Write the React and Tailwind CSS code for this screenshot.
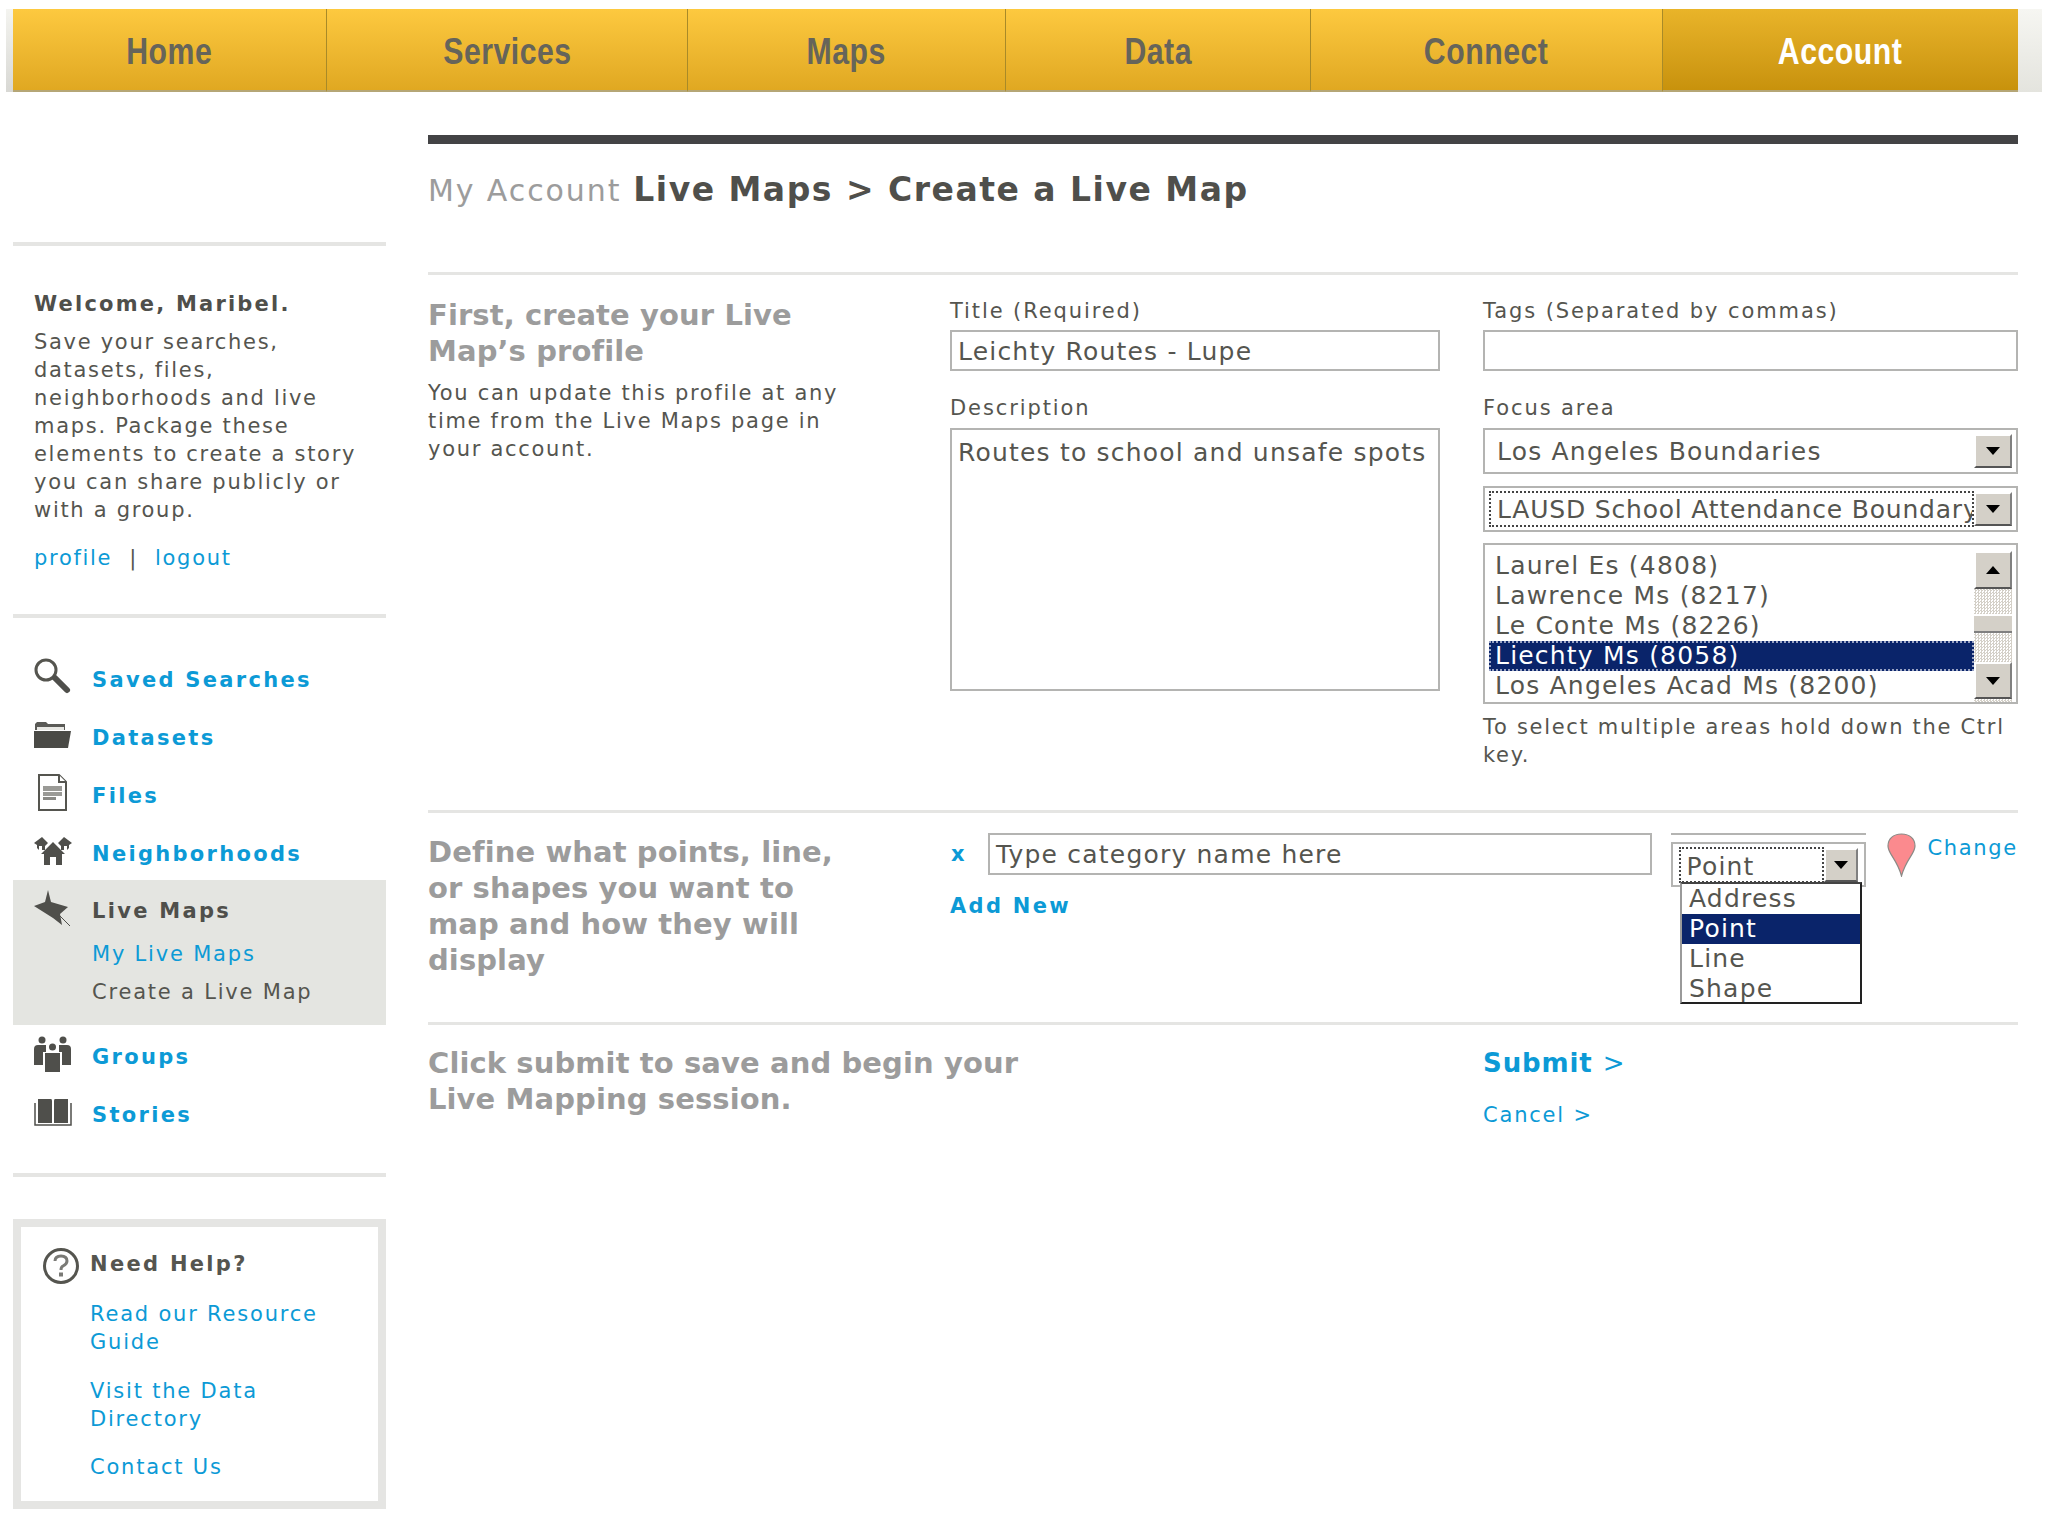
import React from 'react';

const NAV = [
  { label: 'Home', w: 'w-[314px]' },
  { label: 'Services', w: 'w-[361px]' },
  { label: 'Maps', w: 'w-[318px]' },
  { label: 'Data', w: 'w-[305px]' },
  { label: 'Connect', w: 'w-[352px]' },
];

const SearchIcon = () => (
  <svg width="38" height="38" viewBox="0 0 38 38">
    <circle cx="12" cy="12" r="10" fill="none" stroke="#55554f" strokeWidth="3" />
    <path d="M21 20 L33 32" stroke="#4f4f4b" strokeWidth="6" strokeLinecap="round" />
  </svg>
);
const FolderIcon = () => (
  <svg width="37" height="27" viewBox="0 0 37 27">
    <path d="M1 2 L3 0 H12 L14 2 H31 V8 H1 Z" fill="#5a5a56" />
    <path d="M3 5 H30 V8 H3 Z" fill="#e8e8e4" />
    <path d="M0 26 V9 H37 L34 26 Z" fill="#4a4a46" />
  </svg>
);
const FileIcon = () => (
  <svg width="30" height="38" viewBox="0 0 30 38" className="ml-[4px]">
    <path d="M1 1 H21 L28 8 V36 H1 Z" fill="#fff" stroke="#55554f" strokeWidth="2" />
    <path d="M21 1 V8 H28" fill="#fff" stroke="#55554f" strokeWidth="2" />
    <path d="M5 12 H24 V17 H5 Z M5 18 H24 V22 H5 Z" fill="#9a9a96" />
    <path d="M5 23 H18 V26 H5 Z" fill="#8a8a86" />
  </svg>
);
const HomeIcon = () => (
  <svg width="38" height="30" viewBox="0 0 38 30">
    <path d="M19 6 L31 18 H28 V29 H22 V21 H16 V29 H10 V18 H7 Z" fill="#4f4f4b" />
    <path d="M8 1 L14 7 L11 10 V14 H8 V10 H5 V14 L3 12 V9 L0 7 Z M30 1 L38 7 L35 9 V12 L33 14 V10 H30 V14 H27 V10 L24 7 Z" fill="#4f4f4b" />
  </svg>
);
const PinIcon = () => (
  <svg width="38" height="38" viewBox="0 0 38 38">
    <path d="M14 0 L17 12 L34 17 L26 24 L28 35 L19 28 L0 16 L11 12 Z" fill="#4f4f4b" />
    <path d="M26 26 L36 36" stroke="#4f4f4b" strokeWidth="1" />
  </svg>
);
const GroupIcon = () => (
  <svg width="38" height="36" viewBox="0 0 38 36">
    <circle cx="8" cy="4" r="3.5" fill="#4f4f4b" />
    <circle cx="29" cy="4" r="3.5" fill="#4f4f4b" />
    <circle cx="18.5" cy="11" r="3.5" fill="#4f4f4b" />
    <path d="M0 13 Q0 9 4 9 H12 V16 H9 V29 H0 Z M37 13 Q37 9 33 9 H25 V16 H28 V29 H37 Z" fill="#4f4f4b" />
    <path d="M11 17 H26 V36 H11 Z" fill="#4f4f4b" />
  </svg>
);
const BookIcon = () => (
  <svg width="38" height="27" viewBox="0 0 38 27">
    <path d="M4 0 H17 Q18 0 18 2 V24 H4 Z M20 2 Q20 0 21 0 H34 V24 H20 Z" fill="#4f4f4b" />
    <path d="M1 4 V26 H37 V4" fill="none" stroke="#4f4f4b" strokeWidth="1.5" />
  </svg>
);
const HelpIcon = () => (
  <svg width="38" height="38" viewBox="0 0 38 38">
    <circle cx="19" cy="19" r="16.5" fill="none" stroke="#55554f" strokeWidth="3" />
    <path d="M13 14 Q13 9 19 9 Q25 9 25 14 Q25 17 21 19 Q19 20 19 23" fill="none" stroke="#7a7a76" strokeWidth="3" />
    <rect x="17" y="25.5" width="4" height="4" fill="#7a7a76" />
  </svg>
);
const MapPin = () => (
  <svg width="29" height="44" viewBox="0 0 29 44">
    <path d="M14.5 1 C6 1 1 6 1 13 C1 21 10 26 14.5 43 C19 26 28 21 28 13 C28 6 23 1 14.5 1 Z" fill="#fb8a8e" stroke="#8a8a86" strokeWidth="1.2" />
  </svg>
);

const Arrow = ({ up }) => (
  <svg width="14" height="8" viewBox="0 0 14 8">
    <path d={up ? 'M7 0 L14 8 H0 Z' : 'M0 0 H14 L7 8 Z'} fill="#000" />
  </svg>
);

const WinButton = ({ up, className }) => (
  <div
    className={`flex items-center justify-center shrink-0 bg-[#d4d0c8] border-t-2 border-l-2 border-white border-r-2 border-b-2 border-r-[#808080] border-b-[#555] ${className}`}
  >
    <Arrow up={up} />
  </div>
);

const SideItem = ({ icon, label }) => (
  <div className="flex items-center h-[58px]">
    <div className="w-[79px] pl-[21px] flex items-center">{icon}</div>
    <a className="pt-[6px] font-bold text-[#0c9ad6] text-[21px] tracking-[2.3px] leading-[28px]">{label}</a>
  </div>
);

const Label = ({ children }) => (
  <div className="h-[28px] leading-[28px] text-[21px] tracking-[1.9px] text-[#55554f]">{children}</div>
);

const fieldBox = 'border-2 border-[#b4b4b2] bg-white';
const navText = "inline-block pt-[5px] scale-x-[0.84] font-['Liberation_Sans',sans-serif] font-bold text-[36px] tracking-[0.6px]";

export default function App() {
  return (
    <div className="w-[2048px] h-[1536px] bg-white overflow-hidden font-['DejaVu_Sans',sans-serif] text-[#55554f]">
      {/* top nav */}
      <div className="pt-[9px] h-[92px] flex pl-[6px]">
        <div className="w-[7px] h-[83px] bg-gradient-to-b from-[#f4f4f0] to-[#d8d8d4]" />
        {NAV.map((item) => (
          <div
            key={item.label}
            className={`${item.w} h-[83px] flex items-center justify-center border-r border-[#a88a28] border-b-2 border-b-[#b5a676] bg-gradient-to-b from-[#fdc93f] to-[#e0a821] text-[#66645a]`}
          >
            <span className={navText}>{item.label}</span>
          </div>
        ))}
        <div className="w-[355px] h-[83px] flex items-center justify-center border-b-2 border-b-[#b5a676] bg-gradient-to-b from-[#e9b429] to-[#c8920c] text-white">
          <span className={navText}>Account</span>
        </div>
        <div className="w-[24px] h-[83px] bg-gradient-to-b from-[#f6f6f2] to-[#e4e4de]" />
      </div>

      <div className="flex pl-[13px]">
        {/* sidebar */}
        <div className="w-[373px]">
          <div className="mt-[150px] h-[4px] bg-[#e5e5e3]" />
          <div className="pl-[21px]">
            <div className="mt-[44px] h-[28px] leading-[28px] font-bold text-[21px] tracking-[2.2px] text-[#4f4f4b]">Welcome, Maribel.</div>
            <p className="mt-[10px] text-[21px] leading-[28px] tracking-[1.7px] w-[345px]">
              Save your searches,<br />datasets, files,<br />neighborhoods and live<br />maps. Package these<br />elements to create a story<br />you can share publicly or<br />with a group.
            </p>
            <div className="mt-[20px] h-[28px] leading-[28px] text-[21px] tracking-[1.7px] flex">
              <a className="text-[#0c9ad6]">profile</a>
              <span className="mx-[17px]">|</span>
              <a className="text-[#0c9ad6]">logout</a>
            </div>
          </div>
          <div className="mt-[42px] h-[4px] bg-[#e5e5e3]" />

          <div className="mt-[30px]">
            <SideItem icon={<SearchIcon />} label="Saved Searches" />
            <SideItem icon={<FolderIcon />} label="Datasets" />
            <SideItem icon={<FileIcon />} label="Files" />
            <SideItem icon={<HomeIcon />} label="Neighborhoods" />
            <div className="bg-[#e4e5e1] h-[145px]">
              <div className="flex items-center h-[58px]">
                <div className="w-[79px] pl-[21px]"><PinIcon /></div>
                <span className="pt-[6px] font-bold text-[21px] tracking-[2.3px] text-[#4f4f4b]">Live Maps</span>
              </div>
              <div className="pl-[79px] pt-[2px] text-[21px] tracking-[1.8px] leading-[28px]">
                <a className="block text-[#0c9ad6]">My Live Maps</a>
                <div className="mt-[10px]">Create a Live Map</div>
              </div>
            </div>
            <SideItem icon={<GroupIcon />} label="Groups" />
            <SideItem icon={<BookIcon />} label="Stories" />
          </div>

          <div className="mt-[32px] h-[4px] bg-[#e5e5e3]" />

          <div className="mt-[42px] h-[290px] border-8 border-[#e5e5e3] pl-[69px] pt-[23px] relative">
            <div className="absolute left-[21px] top-[20px]"><HelpIcon /></div>
            <div className="h-[28px] leading-[28px] font-bold text-[21px] tracking-[2.3px]">Need Help?</div>
            <div className="text-[21px] tracking-[1.8px] leading-[28px] text-[#0c9ad6]">
              <a className="block mt-[22px]">Read our Resource<br />Guide</a>
              <a className="block mt-[21px]">Visit the Data<br />Directory</a>
              <a className="block mt-[20px]">Contact Us</a>
            </div>
          </div>
        </div>

        {/* main */}
        <div className="ml-[42px] w-[1590px]">
          <div className="mt-[43px] h-[9px] bg-[#434345]" />
          <div className="mt-[26px] h-[40px] leading-[40px] flex items-baseline">
            <span className="text-[30px] tracking-[1.9px] text-[#9c9c9c] mr-[12px]">My Account</span>
            <span className="font-bold text-[33px] tracking-[1.5px] text-[#4f4f4b]">Live Maps &gt; Create a Live Map</span>
          </div>
          <div className="mt-[62px] h-[3px] bg-[#e5e5e3]" />

          {/* profile row */}
          <div className="grid grid-cols-[522px_533px_535px] h-[535px]">
            <div className="pt-[22px]">
              <h2 className="text-[29px] leading-[36px] font-bold tracking-[0.1px] text-[#9c9c9c]">First, create your Live<br />Map’s profile</h2>
              <p className="mt-[10px] text-[21px] leading-[28px] tracking-[1.7px]">You can update this profile at any<br />time from the Live Maps page in<br />your account.</p>
            </div>
            <div className="pt-[22px]">
              <Label>Title (Required)</Label>
              <div className={`mt-[5px] w-[490px] h-[41px] px-[6px] pt-[2px] flex items-center text-[25px] tracking-[1.2px] ${fieldBox}`}>Leichty Routes - Lupe</div>
              <div className="mt-[23px]"><Label>Description</Label></div>
              <div className={`mt-[6px] w-[490px] h-[263px] px-[6px] py-[4px] text-[25px] tracking-[1.2px] ${fieldBox}`}>Routes to school and unsafe spots</div>
            </div>
            <div className="pt-[22px]">
              <Label>Tags (Separated by commas)</Label>
              <div className={`mt-[5px] h-[41px] ${fieldBox}`} />
              <div className="mt-[23px]"><Label>Focus area</Label></div>
              <div className={`mt-[6px] h-[46px] flex items-center justify-between pl-[12px] pr-[4px] text-[25px] tracking-[1.2px] ${fieldBox}`}>
                <span className="pt-[2px]">Los Angeles Boundaries</span>
                <WinButton className="w-[38px] h-[34px]" />
              </div>
              <div className={`mt-[12px] h-[46px] flex items-center justify-between pl-[4px] pr-[4px] text-[25px] tracking-[1.2px] ${fieldBox}`}>
                <div className="flex-1 min-w-0 h-[36px] border-2 border-dotted border-[#444] pl-[6px] leading-[33px] tracking-[0.8px] overflow-hidden whitespace-nowrap">LAUSD School Attendance Boundary</div>
                <WinButton className="w-[38px] h-[34px]" />
              </div>
              <div className={`mt-[11px] h-[161px] flex pl-[4px] pr-[4px] pt-[6px] text-[25px] tracking-[1.2px] ${fieldBox}`}>
                <div className="flex-1 leading-[30px]">
                  <div className="pl-[6px] h-[30px]">Laurel Es (4808)</div>
                  <div className="pl-[6px] h-[30px]">Lawrence Ms (8217)</div>
                  <div className="pl-[6px] h-[30px]">Le Conte Ms (8226)</div>
                  <div className="pl-[4px] h-[30px] bg-[#0a246a] text-white border-2 border-dotted border-[#9aa4c4] leading-[25px]">Liechty Ms (8058)</div>
                  <div className="pl-[6px] h-[30px]">Los Angeles Acad Ms (8200)</div>
                </div>
                <div className="w-[38px] flex flex-col bg-[repeating-conic-gradient(#d4d0c8_0_25%,#fff_0_50%)] bg-[length:3px_3px]">
                  <WinButton up className="w-[38px] h-[38px]" />
                  <div className="mt-[25px] h-[19px] bg-[#d4d0c8] border-t-2 border-white border-b-2 border-b-[#808080]" />
                  <WinButton className="mt-[29px] w-[38px] h-[37px]" />
                </div>
              </div>
              <p className="mt-[9px] text-[21px] leading-[28px] tracking-[1.7px]">To select multiple areas hold down the Ctrl<br />key.</p>
            </div>
          </div>
          <div className="h-[3px] bg-[#e5e5e3]" />

          {/* categories row */}
          <div className="grid grid-cols-[522px_1068px] h-[209px]">
            <div className="pt-[21px]">
              <h2 className="text-[29px] leading-[36px] font-bold tracking-[0.1px] text-[#9c9c9c]">Define what points, line,<br />or shapes you want to<br />map and how they will<br />display</h2>
            </div>
            <div className="pt-[20px] relative">
              <div className="flex items-start">
                <a className="w-[38px] h-[42px] leading-[42px] pl-[1px] font-bold text-[21px] text-[#0c9ad6]">x</a>
                <div className={`w-[664px] h-[42px] px-[6px] pt-[2px] flex items-center text-[25px] tracking-[1.2px] ${fieldBox}`}>Type category name here</div>
                <div className="ml-[19px] w-[196px] h-[54px] border-t-2 border-[#b4b4b2] pt-[7px]">
                  <div className={`h-[45px] flex items-center pl-[6px] pr-[6px] text-[25px] tracking-[1.2px] ${fieldBox} border-b-2`}>
                    <div className="flex-1 h-[36px] border-2 border-dotted border-[#444] pl-[6px] leading-[36px]">Point</div>
                    <WinButton className="w-[34px] h-[34px]" />
                  </div>
                </div>
                <div className="ml-[21px]"><MapPin /></div>
                <a className="ml-[11px] mt-[1px] text-[#0c9ad6] text-[21px] tracking-[1.7px] leading-[28px]">Change</a>
              </div>
              <a className="block mt-[5px] h-[28px] leading-[28px] font-bold text-[21px] tracking-[2.3px] text-[#0c9ad6]">Add New</a>
              <div className="absolute left-[730px] top-[69px] w-[182px] h-[122px] bg-white border-2 border-l-[#9a9a9a] border-t-[#444] border-r-[#222] border-b-[#222] text-[25px] tracking-[1.2px] leading-[30px]">
                <div className="pl-[7px] h-[30px]">Address</div>
                <div className="pl-[7px] h-[30px] bg-[#0a246a] text-white">Point</div>
                <div className="pl-[7px] h-[30px]">Line</div>
                <div className="pl-[7px] h-[30px]">Shape</div>
              </div>
            </div>
          </div>
          <div className="h-[3px] bg-[#e5e5e3]" />

          {/* submit row */}
          <div className="grid grid-cols-[1055px_535px]">
            <div className="pt-[20px]">
              <h2 className="text-[29px] leading-[36px] font-bold tracking-[0.1px] text-[#9c9c9c]">Click submit to save and begin your<br />Live Mapping session.</h2>
            </div>
            <div className="pt-[20px]">
              <a className="block h-[36px] leading-[36px] font-bold text-[26px] tracking-[0.9px] text-[#0c9ad6]">Submit <span className="font-normal">&gt;</span></a>
              <a className="block mt-[20px] h-[28px] leading-[28px] text-[21px] tracking-[1.8px] text-[#0c9ad6]">Cancel &gt;</a>
            </div>
          </div>
        </div>
      </div>
    </div>
  );
}
